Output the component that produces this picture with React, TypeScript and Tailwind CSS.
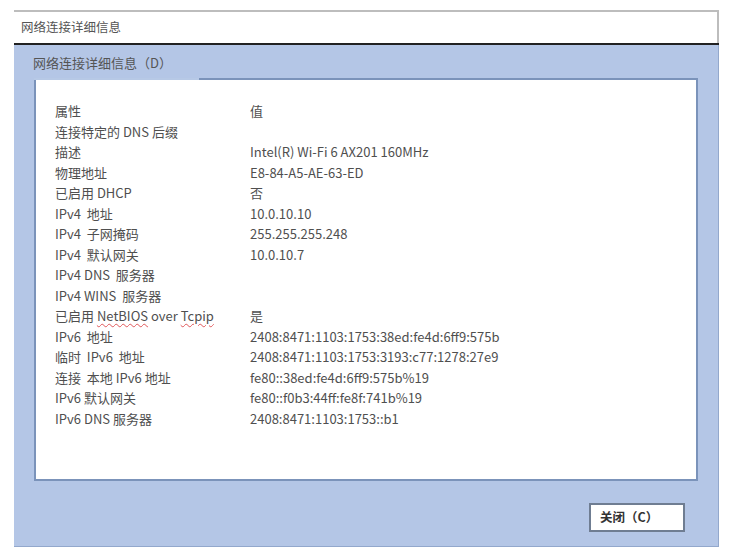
import React from 'react'

const rows: { label: React.ReactNode; value: string }[] = [
  { label: "属性", value: "值" },
  { label: "连接特定的 DNS 后缀", value: "" },
  { label: "描述", value: "Intel(R) Wi-Fi 6 AX201 160MHz" },
  { label: "物理地址", value: "E8-84-A5-AE-63-ED" },
  { label: "已启用 DHCP", value: "否" },
  { label: "IPv4  地址", value: "10.0.10.10" },
  { label: "IPv4  子网掩码", value: "255.255.255.248" },
  { label: "IPv4  默认网关", value: "10.0.10.7" },
  { label: "IPv4 DNS  服务器", value: "" },
  { label: "IPv4 WINS  服务器", value: "" },
  {
    label: (
      <>
        已启用 <span className="underline decoration-wavy decoration-[#e0585a] decoration-1 underline-offset-2">NetBIOS</span> over{" "}
        <span className="underline decoration-wavy decoration-[#e0585a] decoration-1 underline-offset-2">Tcpip</span>
      </>
    ),
    value: "是",
  },
  { label: "IPv6  地址", value: "2408:8471:1103:1753:38ed:fe4d:6ff9:575b" },
  { label: "临时  IPv6  地址", value: "2408:8471:1103:1753:3193:c77:1278:27e9" },
  { label: "连接  本地 IPv6 地址", value: "fe80::38ed:fe4d:6ff9:575b%19" },
  { label: "IPv6 默认网关", value: "fe80::f0b3:44ff:fe8f:741b%19" },
  { label: "IPv6 DNS 服务器", value: "2408:8471:1103:1753::b1" },
]

function App() {
  return (
    <div
      className="w-[756px] h-[557px] bg-white overflow-hidden pt-[10px] pl-[14px] text-[#4f4f4f]"
      style={{ fontFamily: '"Noto Sans CJK SC", "Noto Sans", sans-serif' }}
    >
      <div className="w-[705px]">
        {/* title bar */}
        <div className="h-[33px] bg-white border-t-2 border-r-2 border-[#bdbdbd] flex items-center pl-[7px] text-[12.5px] text-[#555]">
          网络连接详细信息
        </div>
        <div className="h-[2px] bg-[#222]"></div>

        {/* blue body */}
        <div className="bg-[#b4c6e6] border-r border-b border-[#93a8cc] h-[502px] flex flex-col pl-[19px] pr-[20px]">
          <div className="h-[33px] flex items-center pt-[2px] text-[13px] text-[#555]">网络连接详细信息（D）</div>

          <div className="ml-[1px] h-[403px] bg-white flex flex-col border-l-2 border-r-2 border-b-2 border-[#7b93ba]">
            <div className="flex h-[2px] -ml-[2px] -mr-[2px]">
              <div className="w-[165px] bg-[#b7c9e6]"></div>
              <div className="flex-1 bg-[#7b93ba]"></div>
            </div>
            <div className="pl-[19px] pt-[21px] text-[13px] leading-[20.5px]">
              {rows.map((r, i) => (
                <div key={i} className="flex">
                  <div className="w-[195px] shrink-0 whitespace-pre">{r.label}</div>
                  <div className="whitespace-nowrap">{r.value}</div>
                </div>
              ))}
            </div>
          </div>

          <div className="flex justify-end pt-[22px] pr-[13px]">
            <button className="w-[96px] h-[29px] bg-white border-2 border-[#6f7d92] text-left pl-[9px] text-[12.5px] font-bold text-[#333]">
              关闭（C）
            </button>
          </div>
        </div>

        <div className="mt-[10px] ml-[3px] w-[29px] h-[4px] bg-[#3c3c3c]"></div>
      </div>
    </div>
  )
}

export default App
